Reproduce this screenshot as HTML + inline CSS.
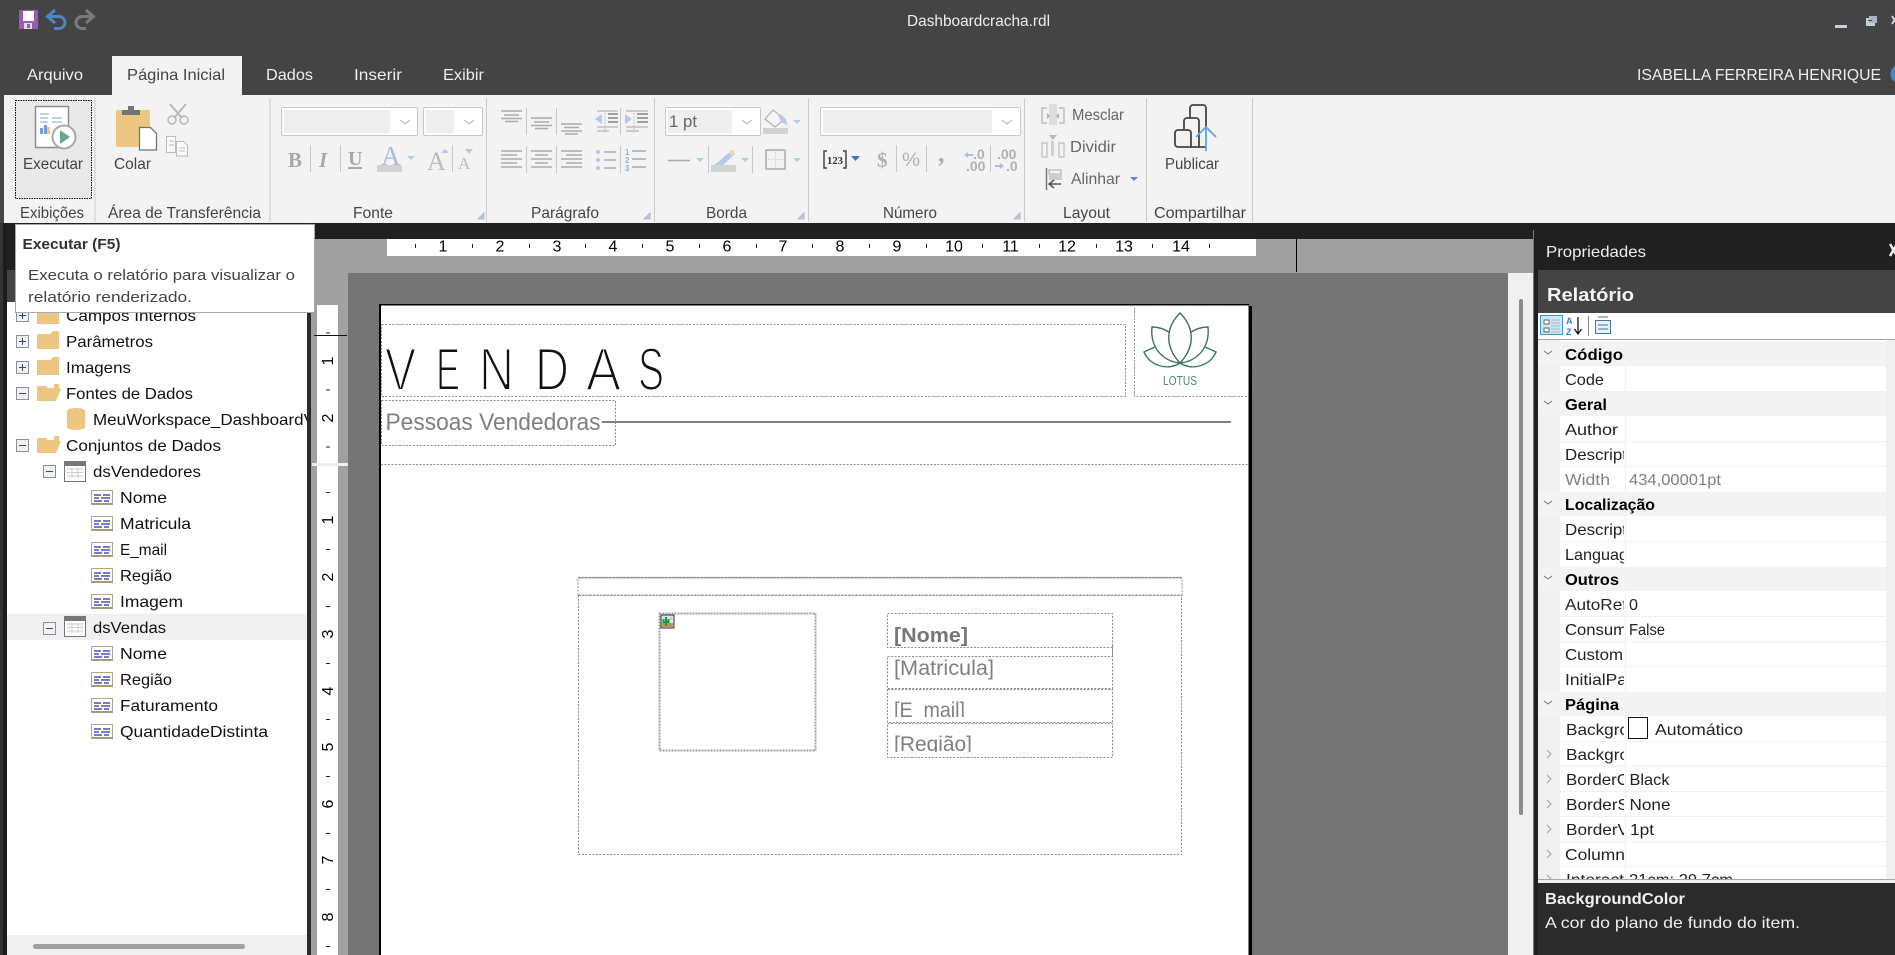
<!DOCTYPE html>
<html lang="pt"><head><meta charset="utf-8"><title>Dashboardcracha.rdl</title>
<style>
html,body{margin:0;padding:0;background:#444;overflow:hidden}
svg{display:block}
text{font-family:"Liberation Sans",sans-serif;font-size:16px;fill:#111}
.w{fill:#eee}.r{fill:#444}.b{font-weight:bold}
.h text{fill:#000}
.g{fill:#808080}
</style></head><body>
<svg xmlns="http://www.w3.org/2000/svg" width="1895" height="955" viewBox="0 0 1895 955">
<defs>
<clipPath id="cTree"><rect x="7" y="302" width="300" height="633"/></clipPath>
<clipPath id="cName"><rect x="1560" y="340" width="64" height="539"/></clipPath>
<clipPath id="cGrid"><rect x="1538" y="340" width="348" height="539"/></clipPath>
<clipPath id="cRul"><rect x="387" y="239" width="869" height="17"/></clipPath>
<clipPath id="cEm"><rect x="888" y="690" width="224" height="27"/></clipPath>
<clipPath id="cRe"><rect x="888" y="724" width="224" height="28"/></clipPath>
<g id="plus"><rect x=".5" y=".5" width="12" height="12" fill="#f2f2f2" stroke="#8a8f98"/><path d="M3 6.5h7M6.5 3v7" stroke="#2c4a80" stroke-width="1"/></g>
<g id="minus"><rect x=".5" y=".5" width="12" height="12" fill="#f2f2f2" stroke="#8a8f98"/><path d="M3 6.5h7" stroke="#2c4a80" stroke-width="1"/></g>
<path id="fc" d="M0 3h13l3-3h6v18H0z" fill="#edc681"/>
<path id="fo" d="M0 18V3h9l2 2h6V1l5 0v5h2l-5 12z M0 18L4 8h20" fill="#edc681"/>
<g id="fld"><rect x=".5" y=".5" width="21" height="14" fill="#fff" stroke="#b5a58a"/><rect x="1" y="13" width="21" height="2" fill="#a8977b"/><path d="M3 5h7M12 5h7M3 8h5M10 8h9M3 11h8M13 11h5" stroke="#4a52b0" stroke-width="1.6"/></g>
<g id="tbl"><rect x=".5" y=".5" width="21" height="20" fill="#fff" stroke="#777"/><rect x="1" y="1" width="20" height="4" fill="#777"/><path d="M3 8h16M3 11.500h16M3 15h16M8 7v10M14 7v10" stroke="#ccc"/></g>
<path id="cv" d="M0 0l5 4 5-4" fill="none" stroke="#b0b0b0" stroke-width="1"/>
<path id="ar" d="M0 0h8l-4 4z" fill="#b5c9e8"/>
<path id="ln" d="M0 0h6v-6z" fill="#b5c9e8" stroke="#b0b0b0" stroke-width=".8"/>
<path id="cd" d="M0 0l4 3 4-3" fill="none" stroke="#777" stroke-width="1"/>
<path id="cr" d="M0 0l4 4-4 4" fill="none" stroke="#a0a0a0" stroke-width="1"/>
</defs>

<!-- title bar -->
<rect width="1895" height="955" fill="#444"/>
<rect x="19" y="10" width="19" height="19" fill="#9b59b6"/><rect x="23" y="11" width="11" height="10" fill="#fff"/><rect x="24" y="23" width="8" height="6" fill="#ddd"/><rect x="27" y="24" width="3" height="4" fill="#9b59b6"/>
<path d="M55 10l-7.500 6.500 7.500 6.500M48 16.500h11a6 6 0 0 1 0 12h-5" fill="none" stroke="#4d86c0" stroke-width="3"/>
<path d="M86 10l7.500 6.500-7.500 6.500M93 16.500h-11a6 6 0 0 0 0 12h4" fill="none" stroke="#7a7a7a" stroke-width="3"/>
<text x="907" y="26" class="w" textLength="143" lengthAdjust="spacingAndGlyphs">Dashboardcracha.rdl</text>
<rect x="1835" y="25" width="12" height="3" fill="#c8cfd8"/>
<rect x="1866" y="18" width="9" height="8" fill="#c8cfd8"/><rect x="1869" y="16" width="8" height="7" fill="#a9b4c4"/><rect x="1868" y="20" width="4" height="1" fill="#444"/>
<path d="M1892 16l5 8M1897 16l-5 8" stroke="#c8cfd8" stroke-width="2"/>
<rect x="112" y="56" width="130" height="39" fill="#f3f3f3"/>
<text x="27" y="80" class="w" textLength="56" lengthAdjust="spacingAndGlyphs">Arquivo</text>
<text x="127" y="80" class="r" textLength="98" lengthAdjust="spacingAndGlyphs">Página Inicial</text>
<text x="266" y="80" class="w" textLength="47" lengthAdjust="spacingAndGlyphs">Dados</text>
<text x="354" y="80" class="w" textLength="48" lengthAdjust="spacingAndGlyphs">Inserir</text>
<text x="443" y="80" class="w" textLength="41" lengthAdjust="spacingAndGlyphs">Exibir</text>
<text x="1637" y="80" class="w" textLength="244" lengthAdjust="spacingAndGlyphs">ISABELLA FERREIRA HENRIQUE</text>
<circle cx="1900" cy="74" r="9.500" fill="#4a86c0"/>

<!-- ribbon -->
<rect x="4" y="95" width="1891" height="128" fill="#f3f3f3"/>
<path d="M95 98v124M270 98v124M486.500 98v124M654.500 98v124M808.500 98v124M1024.500 98v124M1146.500 98v124M1252.500 98v124" stroke="#cbcbcb"/>
<rect x="15.500" y="100.500" width="76" height="98" fill="#e9e9e9" stroke="#000" stroke-dasharray="1.500 1"/>
<!-- executar icon -->
<rect x="35.500" y="106.500" width="33" height="41" fill="#fff" stroke="#8c8c8c" stroke-width="1.500"/>
<path d="M40 114h9M40 118h8M52 118h10M40 122h8M52 122h10" stroke="#98b8d8" stroke-width="1.300"/>
<path d="M40 134v-6h3v6zM44 134v-9h3v9z" fill="#6f9fd8"/><path d="M47 134v-7h3v7z" fill="#edc681"/>
<circle cx="64" cy="137" r="11.500" fill="#fff" stroke="#a9a9a9" stroke-width="2"/><path d="M60 130l10 7-10 7z" fill="#6aa890"/>
<text x="23" y="169" class="r" textLength="60" lengthAdjust="spacingAndGlyphs">Executar</text>
<text x="20" y="218" class="r" textLength="64" lengthAdjust="spacingAndGlyphs">Exibições</text>
<!-- colar icon -->
<rect x="116" y="110" width="34" height="37" rx="2" fill="#edc681"/><path d="M122 115v-5h6v-4h6v4h6v5z" fill="#737373"/>
<path d="M139.500 127.500h11l6 6v16.500h-17z" fill="#fff" stroke="#737373" stroke-width="1.300"/>
<text x="114" y="169" class="r" textLength="37" lengthAdjust="spacingAndGlyphs">Colar</text>
<path d="M170 104l12 14M186 104l-12 14" stroke="#b8b8b8" stroke-width="2"/><circle cx="172" cy="120" r="4" fill="none" stroke="#b8b8b8" stroke-width="1.500"/><circle cx="184" cy="120" r="4" fill="none" stroke="#b8b8b8" stroke-width="1.500"/>
<path d="M166.500 136.500h9v16h-9zM176.500 141.500h7l4 4v10.500h-11zM169 141h5M169 145h5M179 148h6M179 151h6" fill="#fafafa" stroke="#bbb"/>
<text x="108" y="218" class="r" textLength="153" lengthAdjust="spacingAndGlyphs">Área de Transferência</text>
<!-- fonte -->
<rect x="281.500" y="107.500" width="136" height="28" rx="1.500" fill="#fff" stroke="#c8c8c8"/><rect x="284" y="110" width="106" height="23" fill="#efefef"/><use href="#cv" x="400" y="120"/>
<rect x="423.500" y="107.500" width="59" height="28" rx="1.500" fill="#fff" stroke="#c8c8c8"/><rect x="426" y="110" width="28" height="23" fill="#efefef"/><use href="#cv" x="464" y="120"/>
<text x="288" y="167" style="font-family:'Liberation Serif',serif;font-size:21px;font-weight:bold;fill:#a8a8a8">B</text>
<text x="319" y="167" style="font-family:'Liberation Serif',serif;font-size:21px;font-style:italic;font-weight:bold;fill:#a8a8a8">I</text>
<text x="348" y="165" style="font-family:'Liberation Serif',serif;font-size:20px;font-weight:bold;fill:#a8a8a8">U</text><rect x="348" y="167" width="14" height="2" fill="#a8a8a8"/>
<path d="M310.500 145v27M340.500 145v27M452.500 145v27M526.500 108v27M556.500 108v27M620.500 108v27M526.500 146v27M556.500 146v27M620.500 146v27M708.500 146v27M752.500 146v27M896.500 145v27M926.500 145v27M990.500 145v27" stroke="#c8c8c8"/>
<text x="381" y="165" style="font-family:'Liberation Serif',serif;font-size:27px;fill:#a9bcdc">A</text><rect x="377" y="165" width="25" height="7" fill="#d2d2d2"/>
<use href="#ar" x="407" y="156"/>
<text x="427" y="170" style="font-family:'Liberation Serif',serif;font-size:26px;fill:#bbb">A</text><path d="M441 153l4-4 4 4z" fill="#b5c9e8"/>
<text x="458" y="169" style="font-family:'Liberation Serif',serif;font-size:17px;fill:#bbb">A</text><path d="M465 149h8l-4 5z" fill="#b5c9e8"/>
<text x="353" y="218" class="r" textLength="40" lengthAdjust="spacingAndGlyphs">Fonte</text>
<use href="#ln" x="478" y="219"/>
<!-- paragrafo -->
<path d="M501 111h21M504 115h15M501 118.500h21M505 121.500h13M531 118h21M534 122h15M531 125.500h21M535 128.500h13M561 124h21M564 127.500h15M561 131h21M565 134h13" stroke="#ababab" stroke-width="1.600"/>
<path d="M595 119l7-5v10z" fill="#b5c9e8"/><path d="M605 110v23" stroke="#c4c4c4" stroke-dasharray="2 1"/><path d="M608 114h10M608 118h10M608 122h10" stroke="#a0a0a0" stroke-width="2"/><path d="M597 111h21M597 127h21M597 131h12" stroke="#c0c0c0" stroke-width="1.400"/>
<path d="M632 119l-7-5v10z" fill="#b5c9e8"/><path d="M634 110v23" stroke="#c4c4c4" stroke-dasharray="2 1"/><path d="M637 114h11M637 118h11M637 122h11" stroke="#a0a0a0" stroke-width="2"/><path d="M626 111h22M626 127h22M626 131h13" stroke="#c0c0c0" stroke-width="1.400"/>
<path d="M501 151h21M501 155h16M501 159h21M501 163h16M501 167h21M501 166h0M531 151h21M535 155h13M531 159h21M535 163h13M531 167h21M561 151h21M566 155h16M561 159h21M566 163h16M561 167h21" stroke="#ababab" stroke-width="1.600"/>
<circle cx="598" cy="152" r="2" fill="#b5c9e8"/><circle cx="598" cy="160" r="2" fill="#b5c9e8"/><circle cx="598" cy="168" r="2" fill="#b5c9e8"/>
<path d="M604 152h12M604 160h12M604 168h12M632 151h14M632 159h14M632 167h14" stroke="#ababab" stroke-width="1.600"/>
<text x="625" y="155" style="font-size:8px;font-weight:bold;fill:#8fb0dc">1</text><text x="625" y="163" style="font-size:8px;font-weight:bold;fill:#8fb0dc">2</text><text x="625" y="171" style="font-size:8px;font-weight:bold;fill:#8fb0dc">3</text>
<text x="531" y="218" class="r" textLength="68" lengthAdjust="spacingAndGlyphs">Parágrafo</text>
<use href="#ln" x="644" y="219"/>
<!-- borda -->
<rect x="665.500" y="107.500" width="95" height="28" rx="1.500" fill="#fff" stroke="#c8c8c8"/><rect x="668" y="110" width="64" height="23" fill="#efefef"/><use href="#cv" x="742" y="120"/>
<text x="669" y="127" style="fill:#666;font-size:17px" textLength="28" lengthAdjust="spacingAndGlyphs">1 pt</text>
<path d="M773 110l-8 9 10 8 10-8z" fill="#f6f6f6" stroke="#b0b0b0" stroke-width="1.200"/><path d="M777 113c5 1 10 6 10 12l-6-3z" fill="#b5c9e8"/>
<rect x="763" y="128" width="25" height="6" fill="#d2d2d2"/><use href="#ar" x="793" y="120"/>
<path d="M668 160.500h22" stroke="#aaa" stroke-width="1.600"/><use href="#ar" x="696" y="158"/>
<path d="M733 150l2 4-12 11h-9c4-2 7-6 12-10z" fill="#b5c9e8"/><path d="M730 150l4 1 1 4-3 1-3-3z" fill="#e8d9a8"/><rect x="711" y="165" width="25" height="7" fill="#d2d2d2"/><use href="#ar" x="741" y="158"/>
<rect x="766" y="150" width="19" height="19" fill="none" stroke="#aaa" stroke-width="1.500"/><path d="M775.500 152v15M768 159.500h15" stroke="#ccc" stroke-dasharray="1 1"/><use href="#ar" x="793" y="158"/>
<text x="706" y="218" class="r" textLength="41" lengthAdjust="spacingAndGlyphs">Borda</text>
<use href="#ln" x="798" y="219"/>
<!-- numero -->
<rect x="820.500" y="107.500" width="200" height="28" rx="1.500" fill="#fff" stroke="#c8c8c8"/><rect x="823" y="110" width="169" height="23" fill="#efefef"/><use href="#cv" x="1002" y="120"/>
<path d="M827 151h-3v17h3M843 151h3v17h-3" fill="none" stroke="#444" stroke-width="1.500"/>
<text x="827" y="164" style="font-family:'Liberation Serif',serif;font-size:11px;font-weight:bold;fill:#333" textLength="16" lengthAdjust="spacingAndGlyphs">123</text>
<path d="M851 156h9l-4.500 5z" fill="#4a72b8"/>
<text x="877" y="167" style="font-family:'Liberation Serif',serif;font-size:21px;font-weight:bold;fill:#b0b0b0">$</text>
<text x="902" y="166" style="font-size:19px;fill:#b0b0b0" textLength="18" lengthAdjust="spacingAndGlyphs">%</text>
<text x="938" y="162" style="font-family:'Liberation Serif',serif;font-size:26px;font-weight:bold;fill:#b0b0b0">,</text>
<text x="973" y="159" style="font-size:14px;font-weight:bold;fill:#b0b0b0">.0</text><text x="966" y="171" style="font-size:14px;font-weight:bold;fill:#b0b0b0">.00</text><path d="M964 155l4-3v2h5v2h-5v2z" fill="#a6bfe4"/>
<text x="997" y="159" style="font-size:14px;font-weight:bold;fill:#b0b0b0">.00</text><text x="1006" y="171" style="font-size:14px;font-weight:bold;fill:#b0b0b0">.0</text><path d="M1004 166l-4-3v2h-5v2h5v2z" fill="#a6bfe4"/>
<text x="883" y="218" class="r" textLength="54" lengthAdjust="spacingAndGlyphs">Número</text>
<use href="#ln" x="1014" y="219"/>
<!-- layout -->
<rect x="1049" y="104" width="8" height="21" fill="#dcdcdc"/><path d="M1047 108h-5v15h5M1059 108h5v15h-5" fill="none" stroke="#c0c0c0" stroke-width="1.500"/><path d="M1047 113l3 3-3 3zM1059 113l-3 3 3 3z" fill="#b0b0b0"/>
<text x="1072" y="120" class="r" style="fill:#666" textLength="52" lengthAdjust="spacingAndGlyphs">Mesclar</text>
<path d="M1049 135h8l-4 5z" fill="#b8b8b8"/><rect x="1042" y="143" width="5" height="14" fill="none" stroke="#c0c0c0" stroke-width="1.300"/><rect x="1059" y="143" width="5" height="14" fill="none" stroke="#c0c0c0" stroke-width="1.300"/><rect x="1051" y="141" width="3" height="15" fill="#d0d0d0"/>
<text x="1070" y="152" class="r" style="fill:#666" textLength="46" lengthAdjust="spacingAndGlyphs">Dividir</text>
<path d="M1046.500 168v22" stroke="#777" stroke-width="1.500"/><rect x="1049" y="170" width="12" height="4" fill="none" stroke="#aaa"/><rect x="1049" y="174" width="13" height="6" fill="#ccc"/><path d="M1061 184h-11M1054 180l-5 4 5 4" fill="none" stroke="#555" stroke-width="1.500"/>
<text x="1071" y="184" class="r" style="fill:#666" textLength="49" lengthAdjust="spacingAndGlyphs">Alinhar</text>
<path d="M1130 177h8l-4 4z" fill="#5f88c8"/>
<text x="1063" y="218" class="r" textLength="47" lengthAdjust="spacingAndGlyphs">Layout</text>
<!-- publicar -->
<path d="M1190 118v-10a3 3 0 0 1 3-3h10a3 3 0 0 1 3 3v22M1184 130v-9a3 3 0 0 1 3-3h9a3 3 0 0 1 3 3v26M1178 130h10a3 3 0 0 1 3 3v14h-13a3 3 0 0 1-3-3v-11a3 3 0 0 1 3-3zM1191 147h15" fill="none" stroke="#444" stroke-width="1.800"/>
<path d="M1206 151v-24M1196 137l10-10 10 10" fill="none" stroke="#5aa9e0" stroke-width="1.800"/>
<text x="1165" y="169" class="r" textLength="54" lengthAdjust="spacingAndGlyphs">Publicar</text>
<text x="1154" y="218" class="r" textLength="92" lengthAdjust="spacingAndGlyphs">Compartilhar</text>

<!-- dark strip & canvas -->
<rect x="0" y="223" width="1895" height="732" fill="#202020"/>
<rect x="3" y="223" width="4" height="732" fill="#1c1c1c"/><rect x="0" y="223" width="3" height="732" fill="#333"/>
<rect x="311" y="239" width="1222" height="716" fill="#a0a0a0"/>
<rect x="348" y="273" width="1160" height="682" fill="#757575"/>
<rect x="1508" y="273" width="25" height="682" fill="#f0f0f0"/>
<rect x="1519" y="299" width="4" height="516" rx="2" fill="#8a8a8a"/>
<rect x="1296" y="239" width="1" height="33" fill="#000"/>
<!-- h ruler -->
<rect x="387" y="239" width="869" height="17" fill="#fff"/>
<path d="M415.500 244v4M472.500 244v4M529.500 244v4M585.500 244v4M642.500 244v4M699.500 244v4M756.500 244v4M812.500 244v4M869.500 244v4M926.500 244v4M982.500 244v4M1039.500 244v4M1096.500 244v4M1152.500 244v4M1209.500 244v4" stroke="#222"/>
<g clip-path="url(#cRul)" text-anchor="middle">
<text x="443" y="251.500" style="fill:#000">1</text><text x="500" y="251.500" style="fill:#000">2</text><text x="557" y="251.500" style="fill:#000">3</text><text x="613" y="251.500" style="fill:#000">4</text><text x="670" y="251.500" style="fill:#000">5</text><text x="727" y="251.500" style="fill:#000">6</text><text x="783" y="251.500" style="fill:#000">7</text><text x="840" y="251.500" style="fill:#000">8</text><text x="897" y="251.500" style="fill:#000">9</text><text x="954" y="251.500" style="fill:#000">10</text><text x="1010.500" y="251.500" style="fill:#000">11</text><text x="1067" y="251.500" style="fill:#000">12</text><text x="1124" y="251.500" style="fill:#000">13</text><text x="1181" y="251.500" style="fill:#000">14</text>
</g>
<!-- v ruler -->
<rect x="317" y="305" width="21" height="650" fill="#fff"/>
<rect x="312" y="463" width="36" height="3" fill="#efefef"/>
<rect x="314" y="335" width="33" height="1" fill="#111"/>
<path d="M326 333h4M326 390h4M326 447h4M326 492.500h4M326 549.500h4M326 606.500h4M326 663.500h4M326 719.500h4M326 776.500h4M326 833.500h4M326 889.500h4M326 946.500h4" stroke="#222"/>
<g text-anchor="middle" style="fill:#000">
<text transform="translate(333,361) rotate(-90)" style="fill:#000">1</text>
<text transform="translate(333,418) rotate(-90)" style="fill:#000">2</text>
<text transform="translate(333,520) rotate(-90)" style="fill:#000">1</text>
<text transform="translate(333,577) rotate(-90)" style="fill:#000">2</text>
<text transform="translate(333,634) rotate(-90)" style="fill:#000">3</text>
<text transform="translate(333,691) rotate(-90)" style="fill:#000">4</text>
<text transform="translate(333,747) rotate(-90)" style="fill:#000">5</text>
<text transform="translate(333,804) rotate(-90)" style="fill:#000">6</text>
<text transform="translate(333,860) rotate(-90)" style="fill:#000">7</text>
<text transform="translate(333,917) rotate(-90)" style="fill:#000">8</text>
</g>

<!-- page -->
<rect x="1248" y="306" width="4" height="649" fill="#000"/>
<rect x="379.500" y="304" width="869" height="651" fill="#fff"/>
<rect x="379" y="304" width="870" height="1.500" fill="#000"/><rect x="379" y="304" width="2" height="651" fill="#000"/>
<g fill="none" stroke="#8c8c8c" stroke-dasharray="2 1.500">
<rect x="381.500" y="324.500" width="744" height="72"/>
<rect x="1134.500" y="305.500" width="114" height="91"/>
<rect x="381.500" y="400.500" width="234" height="45"/>
<path d="M381 464.500h867"/>
</g>
<g>
<text x="385" y="390" style="font-size:60px;fill:#111;stroke:#fff;stroke-width:2.100" textLength="31" lengthAdjust="spacingAndGlyphs">V</text>
<text x="436" y="390" style="font-size:60px;fill:#111;stroke:#fff;stroke-width:2.100" textLength="24" lengthAdjust="spacingAndGlyphs">E</text>
<text x="479" y="390" style="font-size:60px;fill:#111;stroke:#fff;stroke-width:2.100" textLength="35" lengthAdjust="spacingAndGlyphs">N</text>
<text x="535" y="390" style="font-size:60px;fill:#111;stroke:#fff;stroke-width:2.100" textLength="34" lengthAdjust="spacingAndGlyphs">D</text>
<text x="586" y="390" style="font-size:60px;fill:#111;stroke:#fff;stroke-width:2.100" textLength="35" lengthAdjust="spacingAndGlyphs">A</text>
<text x="638" y="390" style="font-size:60px;fill:#111;stroke:#fff;stroke-width:2.100" textLength="26" lengthAdjust="spacingAndGlyphs">S</text>
</g>
<text x="385.500" y="430" style="font-size:24px;fill:#808080" textLength="215" lengthAdjust="spacingAndGlyphs">Pessoas Vendedoras</text>
<rect x="602" y="421" width="629" height="2" fill="#808080"/>
<!-- lotus -->
<g fill="none" stroke="#3f6f60" stroke-width="1.400">
<path d="M1180 313c-15 15-15 34 0 50c15-16 15-35 0-50z"/>
<path d="M1169 332c-5-3-11-5-17-5c-2 20 10 34 28 36"/>
<path d="M1191 332c5-3 11-5 17-5c2 20-10 34-28 36"/>
<path d="M1155 347l-11 5c6 14 24 19 36 11" stroke="#2f7d5a"/>
<path d="M1205 347l11 5c-6 14-24 19-36 11" stroke="#2f7d5a"/>
</g>
<text x="1163" y="385" style="font-size:13px;fill:#4f8a70" textLength="34" lengthAdjust="spacingAndGlyphs">LOTUS</text>
<!-- body -->
<path d="M578 577.500h604" stroke="#999" stroke-width="1.200"/>
<g fill="none" stroke="#8c8c8c" stroke-dasharray="2 1.500">
<rect x="578" y="578" width="604" height="17"/>
<rect x="578.500" y="595.500" width="603" height="259"/>
<rect x="659.500" y="613.500" width="156" height="137" stroke-width="2" stroke="#a0a0a0" stroke-dasharray="2 1"/>
<rect x="887.500" y="613.500" width="225" height="34"/>
<rect x="887.500" y="656.500" width="225" height="32"/>
<rect x="887.500" y="689.500" width="225" height="33"/>
<rect x="887.500" y="723.500" width="225" height="34"/>
</g>
<path d="M1112.500 645v12" stroke="#8c8c8c"/>
<rect x="661" y="615" width="13" height="13" fill="#d8e4f0" stroke="#334"/><rect x="662" y="623" width="11" height="4" fill="#b8945a"/><path d="M666 617v9M663.500 619v3h5v-3" stroke="#1a9a3a" stroke-width="2" fill="none"/><circle cx="671" cy="618.500" r="1.300" fill="#e8c840"/>
<text x="894" y="642" class="b" style="font-size:20px;fill:#777" textLength="74" lengthAdjust="spacingAndGlyphs">[Nome]</text>
<text x="894" y="675" style="font-size:21px;fill:#808080" textLength="100" lengthAdjust="spacingAndGlyphs">[Matricula]</text>
<g clip-path="url(#cEm)"><text x="894" y="717" style="font-size:21px;fill:#808080" textLength="71" lengthAdjust="spacingAndGlyphs">[E_mail]</text></g>
<g clip-path="url(#cRe)"><text x="894" y="751" style="font-size:21px;fill:#808080" textLength="78" lengthAdjust="spacingAndGlyphs">[Região]</text></g>

<!-- left tree -->
<rect x="7" y="270" width="300" height="32" fill="#444"/>
<rect x="7" y="302" width="300" height="653" fill="#fff"/>
<rect x="307" y="223" width="4" height="732" fill="#2a2a2a"/>
<rect x="7" y="614" width="300" height="26" fill="#f0f0f0"/>
<rect x="7" y="935" width="300" height="20" fill="#f0f0f0"/><rect x="33" y="944" width="212" height="5" rx="2.500" fill="#a0a0a0"/>
<use href="#plus" x="16" y="309"/><use href="#fc" x="37" y="306"/>
<use href="#plus" x="16" y="335"/><use href="#fc" x="37" y="331"/>
<use href="#plus" x="16" y="361"/><use href="#fc" x="37" y="357"/>
<use href="#minus" x="16" y="387"/><use href="#fo" x="37" y="383"/>
<path d="M67 411c0-4 18-4 18 0v16c0 4-18 4-18 0z" fill="#edc681"/>
<use href="#minus" x="16" y="439"/><use href="#fo" x="37" y="435"/>
<use href="#minus" x="43" y="465"/><use href="#tbl" x="64" y="461"/>
<use href="#fld" x="91" y="490"/><use href="#fld" x="91" y="516"/><use href="#fld" x="91" y="542"/><use href="#fld" x="91" y="568"/><use href="#fld" x="91" y="594"/>
<use href="#minus" x="43" y="622"/><use href="#tbl" x="64" y="616"/>
<use href="#fld" x="91" y="646"/><use href="#fld" x="91" y="672"/><use href="#fld" x="91" y="698"/><use href="#fld" x="91" y="724"/>
<g clip-path="url(#cTree)">
<text x="66" y="321" textLength="130" lengthAdjust="spacingAndGlyphs">Campos Internos</text>
<text x="66" y="347" textLength="87" lengthAdjust="spacingAndGlyphs">Parâmetros</text>
<text x="66" y="373" textLength="65" lengthAdjust="spacingAndGlyphs">Imagens</text>
<text x="66" y="399" textLength="127" lengthAdjust="spacingAndGlyphs">Fontes de Dados</text>
<text x="93" y="425" textLength="222" lengthAdjust="spacingAndGlyphs">MeuWorkspace_DashboardV</text>
<text x="66" y="451" textLength="155" lengthAdjust="spacingAndGlyphs">Conjuntos de Dados</text>
<text x="93" y="477" textLength="108" lengthAdjust="spacingAndGlyphs">dsVendedores</text>
<text x="120" y="503" textLength="47" lengthAdjust="spacingAndGlyphs">Nome</text>
<text x="120" y="529" textLength="71" lengthAdjust="spacingAndGlyphs">Matricula</text>
<text x="120" y="555" textLength="47" lengthAdjust="spacingAndGlyphs">E_mail</text>
<text x="120" y="581" textLength="52" lengthAdjust="spacingAndGlyphs">Região</text>
<text x="120" y="607" textLength="63" lengthAdjust="spacingAndGlyphs">Imagem</text>
<text x="93" y="633" textLength="73" lengthAdjust="spacingAndGlyphs">dsVendas</text>
<text x="120" y="659" textLength="47" lengthAdjust="spacingAndGlyphs">Nome</text>
<text x="120" y="685" textLength="52" lengthAdjust="spacingAndGlyphs">Região</text>
<text x="120" y="711" textLength="98" lengthAdjust="spacingAndGlyphs">Faturamento</text>
<text x="120" y="737" textLength="148" lengthAdjust="spacingAndGlyphs">QuantidadeDistinta</text>
</g>
<!-- tooltip -->
<rect x="15.500" y="224.500" width="299" height="88" fill="#fff" stroke="#a8a8a8"/>
<text x="22.500" y="249" class="b" style="font-size:15px;fill:#333" textLength="98" lengthAdjust="spacingAndGlyphs">Executar (F5)</text>
<text x="28" y="280" style="font-size:15px;fill:#444" textLength="267" lengthAdjust="spacingAndGlyphs">Executa o relatório para visualizar o</text>
<text x="28" y="302" style="font-size:15px;fill:#444" textLength="164" lengthAdjust="spacingAndGlyphs">relatório renderizado.</text>

<!-- properties -->
<rect x="1533" y="230" width="1" height="725" fill="#777"/>
<rect x="1534" y="223" width="361" height="732" fill="#202020"/>
<text x="1546" y="257" style="fill:#eee" textLength="100" lengthAdjust="spacingAndGlyphs">Propriedades</text>
<path d="M1890 244l7 12M1897 244l-7 12" stroke="#eee" stroke-width="2.500"/>
<rect x="1538" y="270" width="357" height="43" fill="#444"/>
<text x="1547" y="301" class="b" style="font-size:18px;fill:#f4f4f4" textLength="87" lengthAdjust="spacingAndGlyphs">Relatório</text>
<rect x="1538" y="313" width="357" height="26" fill="#fff"/><rect x="1538" y="339" width="357" height="1" fill="#a8a8a8"/>
<rect x="1540.500" y="315.500" width="22" height="19" fill="#cfe6f8" stroke="#3a9ad9"/>
<path d="M1544 320h5v4h-5zM1544 328h5v4h-5z" fill="#fff" stroke="#333" stroke-width=".7"/><path d="M1551 320h9M1551 323h9M1551 326h9M1551 329h9M1551 332h9" stroke="#9ab" stroke-width=".8"/>
<text x="1566" y="324" style="font-size:9px;font-weight:bold;fill:#3a7ac0">A</text><text x="1566" y="335" style="font-size:9px;font-weight:bold;fill:#3a7ac0">Z</text><path d="M1578 317v16M1574.500 329l3.500 5 3.500-5" fill="none" stroke="#111" stroke-width="1.300"/>
<path d="M1588.500 316v20" stroke="#888"/>
<rect x="1595.500" y="320.500" width="15" height="13" fill="#e8f0fa" stroke="#4a72a8"/><path d="M1598 317h10M1598 325h10M1598 329h10" stroke="#4a72a8"/>
<!-- grid -->
<rect x="1538" y="340" width="357" height="539" fill="#f0f0f0"/>
<rect x="1560" y="340" width="326" height="539" fill="#fff"/>
<path d="M1625.500 366v25M1625.500 416v75M1625.500 516v50M1625.500 591v100M1625.500 716v163" stroke="#f0f0f0"/>
<g fill="#f3f3f3"><rect x="1538" y="342" width="348" height="24"/><rect x="1538" y="392" width="348" height="24"/><rect x="1538" y="492" width="348" height="24"/><rect x="1538" y="567" width="348" height="24"/><rect x="1538" y="692" width="348" height="24"/></g>
<path d="M1560 391.500h326M1560 441.500h326M1560 466.500h326M1560 541.500h326M1560 616.500h326M1560 641.500h326M1560 666.500h326M1560 741.500h326M1560 766.500h326M1560 791.500h326M1560 816.500h326M1560 841.500h326M1560 866.500h326" stroke="#f0f0f0"/>
<use href="#cd" x="1544" y="351"/><use href="#cd" x="1544" y="401"/><use href="#cd" x="1544" y="501"/><use href="#cd" x="1544" y="576"/><use href="#cd" x="1544" y="701"/>
<use href="#cr" x="1547" y="750"/><use href="#cr" x="1547" y="775"/><use href="#cr" x="1547" y="800"/><use href="#cr" x="1547" y="825"/><use href="#cr" x="1547" y="850"/><use href="#cr" x="1547" y="875"/>
<g class="h" clip-path="url(#cGrid)">
<text x="1565" y="360" class="b" textLength="58" lengthAdjust="spacingAndGlyphs">Código</text>
<text x="1565" y="410" class="b" textLength="42" lengthAdjust="spacingAndGlyphs">Geral</text>
<text x="1565" y="510" class="b" textLength="90" lengthAdjust="spacingAndGlyphs">Localização</text>
<text x="1565" y="585" class="b" textLength="54" lengthAdjust="spacingAndGlyphs">Outros</text>
<text x="1565" y="710" class="b" textLength="54" lengthAdjust="spacingAndGlyphs">Página</text>
<text x="1629" y="485" style="fill:#808080" textLength="92" lengthAdjust="spacingAndGlyphs">434,00001pt</text>
<text x="1629" y="610" style="fill:#222" textLength="9" lengthAdjust="spacingAndGlyphs">0</text>
<text x="1629" y="635" style="fill:#222" textLength="36" lengthAdjust="spacingAndGlyphs">False</text>
<rect x="1628.500" y="717.500" width="19" height="21" fill="#fff" stroke="#111"/>
<text x="1655" y="735" style="fill:#222" textLength="88" lengthAdjust="spacingAndGlyphs">Automático</text>
<text x="1629.500" y="785" style="fill:#222" textLength="40" lengthAdjust="spacingAndGlyphs">Black</text>
<text x="1629.500" y="810" style="fill:#222" textLength="41" lengthAdjust="spacingAndGlyphs">None</text>
<text x="1630" y="835" style="fill:#222" textLength="24" lengthAdjust="spacingAndGlyphs">1pt</text>
<text x="1629" y="885" style="fill:#222" textLength="104" lengthAdjust="spacingAndGlyphs">21cm; 29,7cm</text>
</g>
<g clip-path="url(#cName)">
<text x="1565" y="385" style="fill:#222" textLength="39" lengthAdjust="spacingAndGlyphs">Code</text>
<text x="1565" y="435" style="fill:#222" textLength="53" lengthAdjust="spacingAndGlyphs">Author</text>
<text x="1565" y="460" style="fill:#222" textLength="62" lengthAdjust="spacingAndGlyphs">Descript</text>
<text x="1565" y="485" style="fill:#808080" textLength="45" lengthAdjust="spacingAndGlyphs">Width</text>
<text x="1565" y="535" style="fill:#222" textLength="62" lengthAdjust="spacingAndGlyphs">Descript</text>
<text x="1565" y="560" style="fill:#222" textLength="63" lengthAdjust="spacingAndGlyphs">Languag</text>
<text x="1565" y="610" style="fill:#222" textLength="62" lengthAdjust="spacingAndGlyphs">AutoRef</text>
<text x="1565" y="635" style="fill:#222" textLength="62" lengthAdjust="spacingAndGlyphs">Consum</text>
<text x="1565" y="660" style="fill:#222" textLength="58" lengthAdjust="spacingAndGlyphs">Custom</text>
<text x="1565" y="685" style="fill:#222" textLength="62" lengthAdjust="spacingAndGlyphs">InitialPa</text>
<text x="1566" y="735" style="fill:#222" textLength="63" lengthAdjust="spacingAndGlyphs">Backgro</text>
<text x="1566" y="760" style="fill:#222" textLength="63" lengthAdjust="spacingAndGlyphs">Backgro</text>
<text x="1566" y="785" style="fill:#222" textLength="63" lengthAdjust="spacingAndGlyphs">BorderC</text>
<text x="1566" y="810" style="fill:#222" textLength="63" lengthAdjust="spacingAndGlyphs">BorderS</text>
<text x="1566" y="835" style="fill:#222" textLength="63" lengthAdjust="spacingAndGlyphs">BorderV</text>
<text x="1565" y="860" style="fill:#222" textLength="60" lengthAdjust="spacingAndGlyphs">Column</text>
<text x="1566" y="885" style="fill:#222" textLength="58" lengthAdjust="spacingAndGlyphs">Interact</text>
</g>
<rect x="1538" y="879" width="357" height="1" fill="#a8a8a8"/><rect x="1538" y="880" width="357" height="3" fill="#f0f0f0"/>
<rect x="1538" y="883" width="357" height="72" fill="#2b2b2b"/>
<text x="1545" y="904" class="b" style="fill:#f0f0f0" textLength="140" lengthAdjust="spacingAndGlyphs">BackgroundColor</text>
<text x="1545" y="928" style="fill:#eee" textLength="255" lengthAdjust="spacingAndGlyphs">A cor do plano de fundo do item.</text>
</svg>
</body></html>
